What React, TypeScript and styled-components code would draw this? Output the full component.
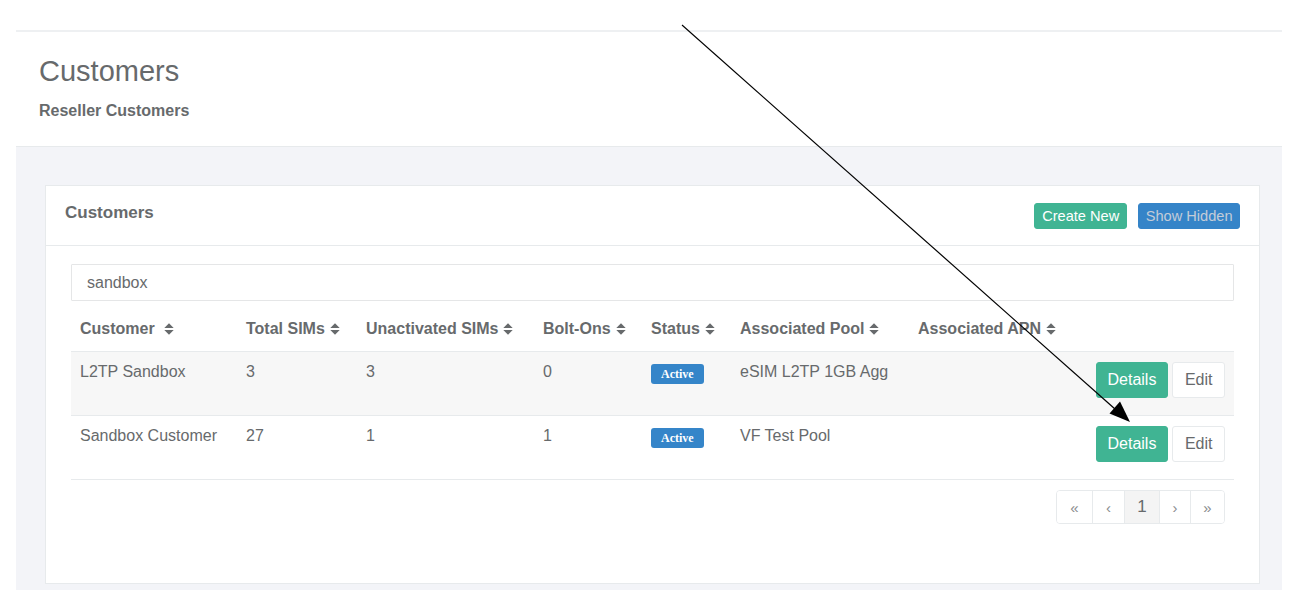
import React from 'react'
import styled, { createGlobalStyle } from 'styled-components'

const GlobalStyle = createGlobalStyle`
  html, body {
    margin: 0;
    padding: 0;
    background: #ffffff;
  }
  body {
    font-family: 'Liberation Sans', Arial, sans-serif;
    color: #676a6c;
  }
  * {
    box-sizing: border-box;
  }
`

const Root = styled.div`
  position: relative;
  min-height: 601px;
  padding: 30px 16px 0 16px;
`

const PageHeading = styled.div`
  border-top: 2px solid #eef0f2;
  border-bottom: 1px solid #e7eaec;
  padding: 23px 23px 24px 23px;
`

const Title = styled.h2`
  margin: 0;
  font-size: 29px;
  line-height: 32px;
  font-weight: 400;
  color: #676a6c;
`

const SubTitle = styled.div`
  margin-top: 13px;
  font-size: 16px;
  line-height: 22px;
  font-weight: 700;
`

const Content = styled.div`
  background: #f3f4f8;
  padding: 38px 22px 6px 29px;
`

const Card = styled.div`
  background: #ffffff;
  border: 1px solid #e7eaec;
`

const CardHeader = styled.div`
  display: flex;
  justify-content: space-between;
  align-items: flex-start;
  height: 60px;
  padding: 17px 19px 0 19px;
  border-bottom: 1px solid #e7eaec;
`

const CardTitle = styled.h5`
  margin: 0;
  font-size: 17px;
  line-height: 20px;
  font-weight: 700;
  color: #676a6c;
`

const HeaderActions = styled.div`
  display: flex;
  gap: 11px;
`

const SmallButton = styled.button<{ $tone: 'green' | 'blue' }>`
  height: 26px;
  padding: 0 ${({ $tone }) => ($tone === 'green' ? '7px' : '6.5px')};
  border: 1px solid ${({ $tone }) => ($tone === 'green' ? '#3fb493' : '#3584c8')};
  border-radius: 3px;
  background: ${({ $tone }) => ($tone === 'green' ? '#40b493' : '#3584c8')};
  color: ${({ $tone }) => ($tone === 'green' ? '#ffffff' : '#c3ccd8')};
  font-family: 'Liberation Sans', Arial, sans-serif;
  font-size: 14.6px;
  line-height: 24px;
`

const CardBody = styled.div`
  padding: 18px 25px 59px 25px;
`

const SearchInput = styled.input`
  display: block;
  width: 100%;
  height: 37px;
  padding: 0 15px;
  border: 1px solid #e5e6e7;
  border-radius: 1px;
  font-family: 'Liberation Sans', Arial, sans-serif;
  font-size: 16px;
  color: #676a6c;
  outline: none;
`

const Table = styled.table`
  width: 100%;
  margin-top: 9px;
  border-collapse: collapse;
  table-layout: fixed;
  border-bottom: 1px solid #e7eaec;
`

const HeadCell = styled.th`
  padding: 8px 9px 11px 9px;
  text-align: left;
  font-size: 16px;
  line-height: 22px;
  font-weight: 700;
  white-space: nowrap;
  border-bottom: 1px solid #e7eaec;
`

const Row = styled.tr<{ $striped: boolean }>`
  background: ${({ $striped }) => ($striped ? '#f7f7f7' : '#ffffff')};
  & + & {
    border-top: 1px solid #e7eaec;
  }
`

const Cell = styled.td<{ $right?: boolean }>`
  padding: 10px 9px 17px 9px;
  vertical-align: top;
  font-size: 16px;
  line-height: 20px;
  text-align: ${({ $right }) => ($right ? 'right' : 'left')};
  white-space: nowrap;
`

const Badge = styled.span`
  display: inline-block;
  margin-top: 2px;
  height: 20px;
  padding: 0 10px;
  border-radius: 3px;
  background: #3585c9;
  color: #ffffff;
  font-family: 'Liberation Serif', 'Times New Roman', serif;
  font-weight: 700;
  font-size: 12px;
  line-height: 20px;
  vertical-align: top;
`

const RowButtons = styled.div`
  display: flex;
  justify-content: flex-end;
  gap: 4px;
`

const RowButton = styled.button<{ $primary?: boolean }>`
  height: 36px;
  padding: 0 ${({ $primary }) => ($primary ? '11px' : '11.5px')};
  border: 1px solid ${({ $primary }) => ($primary ? '#40b493' : '#e7eaec')};
  border-radius: 3px;
  background: ${({ $primary }) => ($primary ? '#40b493' : '#ffffff')};
  color: ${({ $primary }) => ($primary ? '#ffffff' : '#676a6c')};
  font-family: 'Liberation Sans', Arial, sans-serif;
  font-size: 16px;
`

const PagerWrap = styled.div`
  display: flex;
  justify-content: flex-end;
  margin-top: 10px;
  padding-right: 9px;
`

const Pager = styled.ul`
  display: flex;
  margin: 0;
  padding: 0;
  list-style: none;
  border: 1px solid #e7eaec;
  border-radius: 4px;
  overflow: hidden;
`

const PageItem = styled.li<{ $active?: boolean; $w: number }>`
  width: ${({ $w }) => $w}px;
  height: 32px;
  display: flex;
  align-items: center;
  justify-content: center;
  background: ${({ $active }) => ($active ? '#f4f4f4' : '#ffffff')};
  color: ${({ $active }) => ($active ? '#676a6c' : '#8a8c8e')};
  font-size: ${({ $active }) => ($active ? '17px' : '15px')};
  & + & {
    border-left: 1px solid #e7eaec;
  }
`

const Overlay = styled.svg`
  position: absolute;
  top: 0;
  left: 0;
  pointer-events: none;
`

const SortIcon = () => (
  <svg width="10" height="12" viewBox="0 0 10 12" style={{ marginLeft: 5, verticalAlign: -1 }}>
    <path d="M0.3 5 L5 0.2 L9.7 5 Z M0.3 7 L5 11.8 L9.7 7 Z" fill="#676a6c" />
  </svg>
)

const columns = [
  { label: 'Customer\u00a0', width: 166 },
  { label: 'Total SIMs', width: 120 },
  { label: 'Unactivated SIMs', width: 177 },
  { label: 'Bolt-Ons', width: 108 },
  { label: 'Status', width: 89 },
  { label: 'Associated Pool', width: 178 },
  { label: 'Associated APN', width: 178 },
]

const customers = [
  { name: 'L2TP Sandbox', total: 3, unactivated: 3, boltOns: 0, pool: 'eSIM L2TP 1GB Agg', apn: '' },
  { name: 'Sandbox Customer', total: 27, unactivated: 1, boltOns: 1, pool: 'VF Test Pool', apn: '' },
]

const pages = [
  { label: '«', w: 35 },
  { label: '‹', w: 32 },
  { label: '1', w: 35, active: true },
  { label: '›', w: 31 },
  { label: '»', w: 34 },
]

export default function App() {
  return (
    <Root>
      <GlobalStyle />
      <PageHeading>
        <Title>Customers</Title>
        <SubTitle>Reseller Customers</SubTitle>
      </PageHeading>
      <Content>
        <Card>
          <CardHeader>
            <CardTitle>Customers</CardTitle>
            <HeaderActions>
              <SmallButton $tone="green">Create New</SmallButton>
              <SmallButton $tone="blue">Show Hidden</SmallButton>
            </HeaderActions>
          </CardHeader>
          <CardBody>
            <SearchInput defaultValue="sandbox" />
            <Table>
              <colgroup>
                {columns.map((c) => (
                  <col key={c.label} style={{ width: c.width }} />
                ))}
                <col />
              </colgroup>
              <thead>
                <tr>
                  {columns.map((c) => (
                    <HeadCell key={c.label}>
                      {c.label}
                      <SortIcon />
                    </HeadCell>
                  ))}
                  <HeadCell />
                </tr>
              </thead>
              <tbody>
                {customers.map((c, i) => (
                  <Row key={c.name} $striped={i % 2 === 0}>
                    <Cell>{c.name}</Cell>
                    <Cell>{c.total}</Cell>
                    <Cell>{c.unactivated}</Cell>
                    <Cell>{c.boltOns}</Cell>
                    <Cell>
                      <Badge>Active</Badge>
                    </Cell>
                    <Cell>{c.pool}</Cell>
                    <Cell>{c.apn}</Cell>
                    <Cell $right>
                      <RowButtons>
                        <RowButton $primary>Details</RowButton>
                        <RowButton>Edit</RowButton>
                      </RowButtons>
                    </Cell>
                  </Row>
                ))}
              </tbody>
            </Table>
            <PagerWrap>
              <Pager>
                {pages.map((p) => (
                  <PageItem key={p.label} $w={p.w} $active={p.active}>
                    {p.label}
                  </PageItem>
                ))}
              </Pager>
            </PagerWrap>
          </CardBody>
        </Card>
      </Content>
      <Overlay width="1298" height="601" viewBox="0 0 1298 601">
        <line x1="682" y1="25" x2="1115" y2="409" stroke="#000" strokeWidth="1.2" />
        <path d="M1130 422 L1109.5 413.5 L1120 401.5 Z" fill="#000" />
      </Overlay>
    </Root>
  )
}
